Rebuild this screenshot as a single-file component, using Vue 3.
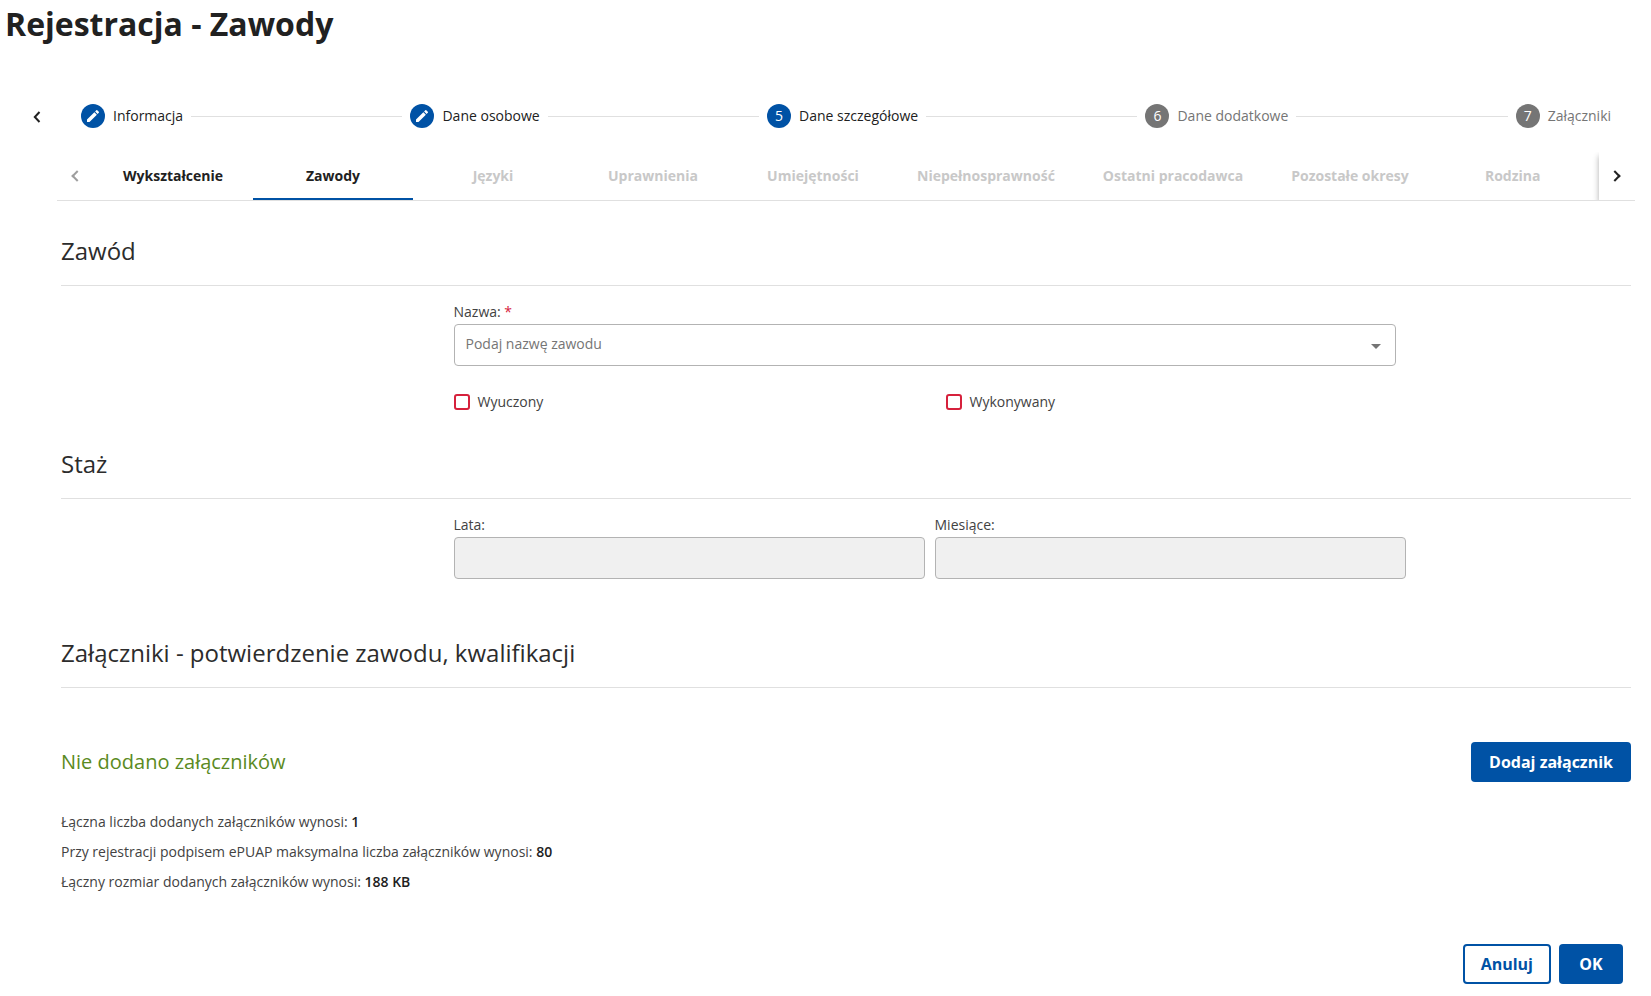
<script setup>
import { ref } from 'vue'

const steps = [
  { label: 'Informacja', state: 'done' },
  { label: 'Dane osobowe', state: 'done' },
  { label: 'Dane szczegółowe', state: 'current', number: 5 },
  { label: 'Dane dodatkowe', state: 'upcoming', number: 6 },
  { label: 'Załączniki', state: 'upcoming', number: 7 },
]

const tabs = [
  { label: 'Wykształcenie', enabled: true },
  { label: 'Zawody', enabled: true },
  { label: 'Języki' },
  { label: 'Uprawnienia' },
  { label: 'Umiejętności' },
  { label: 'Niepełnosprawność' },
  { label: 'Ostatni pracodawca' },
  { label: 'Pozostałe okresy' },
  { label: 'Rodzina' },
]

const activeTab = ref('Zawody')
const occupation = ref('')
const learned = ref(false)
const practised = ref(false)
const years = ref('')
const months = ref('')

const summary = [
  { label: 'Łączna liczba dodanych załączników wynosi:', value: '1' },
  { label: 'Przy rejestracji podpisem ePUAP maksymalna liczba załączników wynosi:', value: '80' },
  { label: 'Łączny rozmiar dodanych załączników wynosi:', value: '188 KB' },
]
</script>

<template>
  <main class="page">
    <h1 class="title">Rejestracja - Zawody</h1>

    <div class="stepper">
      <button class="stepper-back" type="button" aria-label="Poprzedni krok">
        <svg width="8" height="12" viewBox="0 0 8 12"><path d="M6.5 1 1.8 6l4.7 5" /></svg>
      </button>
      <ol class="steps">
        <template v-for="(step, i) in steps" :key="step.label">
          <li v-if="i" class="connector" aria-hidden="true"></li>
          <li class="step" :class="step.state">
            <span class="badge">
              <svg v-if="step.state === 'done'" width="16" height="16" viewBox="0 0 24 24">
                <path d="M3 17.25V21h3.75L17.81 9.94l-3.75-3.75L3 17.25zM20.71 7.04a1 1 0 0 0 0-1.41l-2.34-2.34a1 1 0 0 0-1.41 0l-1.83 1.83 3.75 3.75 1.83-1.83z" />
              </svg>
              <template v-else>{{ step.number }}</template>
            </span>
            <span>{{ step.label }}</span>
          </li>
        </template>
      </ol>
    </div>

    <div class="panel">
      <nav class="tabs">
        <button class="pager before" type="button" disabled aria-label="Przewiń w lewo">
          <span class="chevron left"></span>
        </button>
        <div class="tab-list" role="tablist">
          <button
            v-for="tab in tabs"
            :key="tab.label"
            class="tab"
            :class="{ active: tab.label === activeTab }"
            type="button"
            role="tab"
            :aria-selected="tab.label === activeTab"
            :disabled="!tab.enabled"
            @click="activeTab = tab.label"
          >{{ tab.label }}</button>
        </div>
        <button class="pager after" type="button" aria-label="Przewiń w prawo">
          <span class="chevron right"></span>
        </button>
      </nav>

      <form class="content" @submit.prevent>
        <section class="section">
          <h2>Zawód</h2>
          <div class="fields occupation">
            <label for="occupation">Nazwa: <span class="required">*</span></label>
            <div class="select-box">
              <select id="occupation" v-model="occupation" class="control" required>
                <option value="">Podaj nazwę zawodu</option>
              </select>
              <svg class="arrow" width="10" height="5" viewBox="0 0 10 5"><path d="M0 0h10L5 5z" /></svg>
            </div>
            <div class="checks">
              <label class="check"><input v-model="learned" type="checkbox" />Wyuczony</label>
              <label class="check"><input v-model="practised" type="checkbox" />Wykonywany</label>
            </div>
          </div>
        </section>

        <section class="section">
          <h2>Staż</h2>
          <div class="fields duration">
            <div class="field">
              <label for="years">Lata:</label>
              <input id="years" v-model="years" class="control" type="text" disabled />
            </div>
            <div class="field">
              <label for="months">Miesiące:</label>
              <input id="months" v-model="months" class="control" type="text" disabled />
            </div>
          </div>
        </section>

        <section class="section">
          <h2>Załączniki - potwierdzenie zawodu, kwalifikacji</h2>
          <div class="attachments">
            <p class="empty">Nie dodano załączników</p>
            <button class="btn primary" type="button">Dodaj załącznik</button>
          </div>
          <div class="summary">
            <p v-for="row in summary" :key="row.label">{{ row.label }} <b>{{ row.value }}</b></p>
          </div>
        </section>

        <div class="actions">
          <button class="btn outline" type="button">Anuluj</button>
          <button class="btn primary" type="submit">OK</button>
        </div>
      </form>
    </div>
  </main>
</template>

<style>
body {
  margin: 0;
  background: #fff;
}
</style>

<style scoped>
.page,
.page * {
  box-sizing: border-box;
}
.page {
  padding: 0 16px 12px 5px;
  color: #212121;
  font-family: 'Open Sans', 'Noto Sans', sans-serif;
  font-size: 14px;
  line-height: 20px;
}
button,
input,
select {
  font: inherit;
}
button {
  padding: 0;
  border: 0;
  background: none;
  cursor: pointer;
}
button:disabled {
  cursor: default;
}
.title {
  margin: 0;
  font-size: 32px;
  line-height: 48px;
  font-weight: 700;
}

.stepper {
  display: flex;
  align-items: center;
  height: 72px;
  margin-top: 32px;
}
.stepper-back {
  flex: none;
  display: flex;
  align-items: center;
  justify-content: center;
  width: 24px;
  height: 24px;
  margin-left: 20px;
  padding-top: 2px;
}
.stepper-back svg {
  fill: none;
  stroke: #212121;
  stroke-width: 2;
}
.steps {
  flex: 1;
  display: flex;
  align-items: center;
  margin: 0 24px 0 32px;
  padding: 0;
  list-style: none;
}
.step {
  display: flex;
  align-items: center;
  gap: 8px;
  white-space: nowrap;
}
.step.upcoming {
  color: #757575;
}
.badge {
  display: flex;
  align-items: center;
  justify-content: center;
  width: 24px;
  height: 24px;
  border-radius: 50%;
  background: #0052a5;
  color: #fff;
}
.badge svg {
  fill: #fff;
}
.upcoming .badge {
  background: #757575;
}
.connector {
  flex: 1;
  height: 1px;
  margin: 0 8px;
  background: #e0e0e0;
}

.panel {
  margin-left: 52px;
}
.tabs {
  display: flex;
  overflow: hidden;
  border-bottom: 1px solid #e0e0e0;
}
.pager {
  flex: none;
  display: flex;
  align-items: center;
  justify-content: center;
  width: 36px;
  height: 48px;
}
.pager.before {
  padding-left: 4px;
}
.pager.after {
  position: relative;
  padding-right: 4px;
  background: #fff;
  box-shadow: 0 4px 6px rgba(0, 0, 0, 0.32);
}
.chevron {
  width: 8px;
  height: 8px;
  border: solid #212121;
  border-width: 2px 2px 0 0;
}
.chevron.left {
  border-color: #9e9e9e;
  transform: rotate(-135deg);
}
.chevron.right {
  transform: rotate(45deg);
}
.tab-list {
  flex: 1;
  display: flex;
  min-width: 0;
  overflow: hidden;
}
.tab {
  flex: none;
  min-width: 160px;
  height: 48px;
  padding: 0 24px;
  border: solid transparent;
  border-width: 2px 0;
  color: #212121;
  font-weight: 700;
}
.tab:disabled {
  color: #c8c8c8;
}
.tab.active {
  border-bottom-color: #0052a5;
}

.content {
  padding: 32px 4px 0;
}
h2 {
  margin: 0;
  padding-bottom: 16px;
  border-bottom: 1px solid #e0e0e0;
  color: #2c2c2c;
  font-size: 24px;
  line-height: 36px;
  font-weight: 400;
}
label,
.summary {
  color: #424242;
}
.fields {
  margin-left: 25%;
  padding-top: 16px;
}
.occupation {
  width: 60%;
  padding-bottom: 34px;
}
.required {
  color: #d6213c;
}
.fields label {
  display: block;
}
.control {
  display: block;
  width: 100%;
  height: 42px;
  padding: 0 11px 2px;
  border: 1px solid #b3b3b3;
  border-radius: 4px;
  background: #fff;
  color: #757575;
  appearance: none;
}
.control:disabled {
  background: #f0f0f0;
}
.select-box,
.field .control {
  margin-top: 2px;
}
.select-box {
  position: relative;
}
.arrow {
  position: absolute;
  top: 20px;
  right: 15px;
  fill: #757575;
  pointer-events: none;
}
.checks {
  display: grid;
  grid-template-columns: 1fr 1fr;
  gap: 42px;
  margin-top: 26px;
}
.fields .check {
  display: flex;
  align-items: center;
  gap: 8px;
}
.check input {
  width: 16px;
  height: 16px;
  margin: 0;
  border: 2px solid #d6213c;
  border-radius: 3px;
  background: #fff;
  appearance: none;
}
.check input:checked {
  background: #d6213c;
}
.duration {
  display: flex;
  gap: 10px;
  padding-bottom: 56px;
}
.field {
  width: 40%;
}

.attachments {
  display: flex;
  align-items: center;
  justify-content: space-between;
  padding-top: 54px;
}
.empty {
  margin: 0;
  color: #5a8a22;
  font-size: 20px;
  line-height: 28px;
}
.btn {
  height: 40px;
  padding: 0 18px;
  border-radius: 4px;
  font-size: 16px;
  font-weight: 700;
}
.btn.primary {
  min-width: 64px;
  background: #0052a5;
  color: #fff;
}
.btn.outline {
  padding: 0 16px;
  border: 2px solid #0052a5;
  background: #fff;
  color: #0052a5;
}
.summary {
  padding-top: 30px;
}
.summary p {
  margin: 0 0 10px;
}
.summary b {
  color: #212121;
  font-weight: 600;
}
.actions {
  display: flex;
  justify-content: flex-end;
  gap: 8px;
  padding: 42px 8px 0;
}
</style>
